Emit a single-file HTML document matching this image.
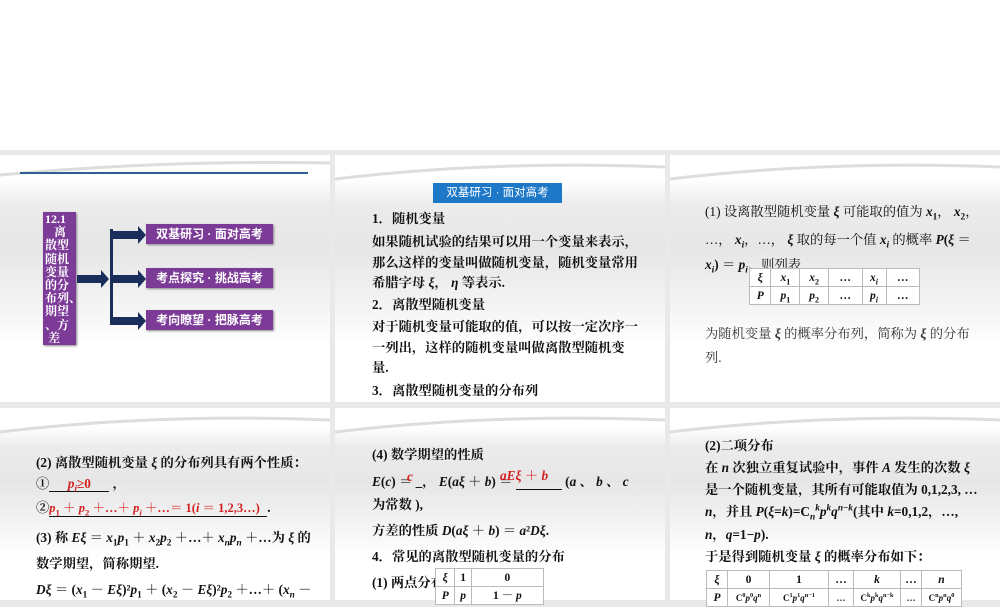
<!DOCTYPE html>
<html><head><meta charset="utf-8"><style>
*{margin:0;padding:0;box-sizing:border-box}
body{width:1000px;height:600px;overflow:hidden;background:#e9e9e9;position:relative;font-family:"Liberation Serif","Noto Serif CJK SC",serif;color:#111}
sub,sup{line-height:0;font-size:70%}
.top{position:absolute;left:0;top:0;width:1000px;height:150px;background:#fff}
.s{position:absolute;overflow:hidden;background:linear-gradient(#fff 0%,#fff 10%,#ececec 20%,#e6e6e6 38%,#f2f2f2 58%,#fff 78%,#fff 100%)}
.s svg.sw{position:absolute;left:0;top:0}
.t{position:absolute;font-size:13.3px;font-weight:bold;white-space:nowrap;line-height:16px}
.r{color:#d42020}
i{font-style:italic}
.pb{position:absolute;background:#7d3b98;color:#fff;font-family:"Liberation Sans","Noto Sans CJK SC",sans-serif;font-weight:bold;font-size:12px;text-align:center;line-height:20px;box-shadow:1px 1px 2px #888;white-space:nowrap}
table{position:absolute;border-collapse:collapse;font-size:11.5px;font-weight:bold;line-height:14px}
td{border:1px solid #bbb;text-align:center;padding:0;height:18px;background:#fff;white-space:nowrap}
.u{display:inline-block;border-bottom:1px solid #111;white-space:nowrap;line-height:15px}
</style></head><body>
<div class="top"></div>

<!-- slide 1 -->
<div class="s" style="left:0;top:155px;width:330px;height:247px">
<svg class="sw" width="330" height="60"><path d="M0 20 Q160 5 330 8" stroke="#ddd" stroke-width="3" fill="none"/><line x1="20" y1="18" x2="308" y2="18" stroke="#2d5f95" stroke-width="2"/></svg>
</div>
<div class="pb" style="left:43px;top:212px;width:33px;height:133px;font-family:'Liberation Serif','Noto Serif CJK SC',serif;font-size:12px;line-height:13.2px;text-align:left;padding:1px 2px;overflow:visible">12.1<br>&nbsp;&nbsp;&nbsp;离<br>散型<br>随机<br>变量<br>的分<br>布列、<br>期望<br>、方<br>&nbsp;差</div>
<svg style="position:absolute;left:76px;top:220px" width="72" height="115">
<g fill="#1a2e5c">
<rect x="1" y="55" width="24" height="8"/><polygon points="25,50 33,59 25,68"/>
<rect x="34" y="9" width="3" height="96"/>
<rect x="37" y="11" width="26" height="8"/><polygon points="62,6 70,15 62,24"/>
<rect x="37" y="55" width="26" height="8"/><polygon points="62,50 70,59 62,68"/>
<rect x="37" y="97" width="26" height="8"/><polygon points="62,92 70,101 62,110"/>
</g></svg>
<div class="pb" style="left:146px;top:224px;width:127px;height:20px">双基研习 · 面对高考</div>
<div class="pb" style="left:146px;top:268px;width:127px;height:20px">考点探究 · 挑战高考</div>
<div class="pb" style="left:146px;top:310px;width:127px;height:20px">考向瞭望 · 把脉高考</div>

<!-- slide 2 -->
<div class="s" style="left:335px;top:155px;width:330px;height:247px">
<svg class="sw" width="330" height="40"><path d="M0 24 Q160 5 330 12" stroke="#ddd" stroke-width="3" fill="none"/></svg>
</div>
<div style="position:absolute;left:433px;top:183px;width:129px;height:20px;background:#1e78c8;color:#fff;font-family:'Liberation Sans','Noto Sans CJK SC',sans-serif;font-size:11.5px;text-align:center;line-height:20px">双基研习 · 面对高考</div>
<div class="t" style="left:372px;top:211px">1．随机变量</div>
<div class="t" style="left:372px;top:234px">如果随机试验的结果可以用一个变量来表示，</div>
<div class="t" style="left:372px;top:255px">那么这样的变量叫做随机变量，随机变量常用</div>
<div class="t" style="left:372px;top:275px">希腊字母 <i>ξ</i>， <i>η</i> 等表示.</div>
<div class="t" style="left:372px;top:297px">2．离散型随机变量</div>
<div class="t" style="left:372px;top:319px">对于随机变量可能取的值，可以按一定次序一</div>
<div class="t" style="left:372px;top:340px">一列出，这样的随机变量叫做离散型随机变</div>
<div class="t" style="left:372px;top:360px">量.</div>
<div class="t" style="left:372px;top:383px">3．离散型随机变量的分布列</div>

<!-- slide 3 -->
<div class="s" style="left:670px;top:155px;width:330px;height:247px">
<svg class="sw" width="330" height="40"><path d="M0 24 Q160 5 330 12" stroke="#ddd" stroke-width="3" fill="none"/></svg>
</div>
<div class="t" style="left:705px;top:204px;font-weight:normal">(1) 设离散型随机变量 <b><i>ξ</i></b> 可能取的值为 <b><i>x</i><sub>1</sub></b>， <b><i>x</i><sub>2</sub></b>，</div>
<div class="t" style="left:705px;top:232px;font-weight:normal">…， <b><i>x<sub>i</sub></i></b>，…， <b><i>ξ</i></b> 取的每一个值 <b><i>x<sub>i</sub></i></b> 的概率 <b><i>P</i>(<i>ξ</i> ＝</b></div>
<div class="t" style="left:705px;top:257px;font-weight:normal"><b><i>x<sub>i</sub></i>) ＝ <i>p<sub>i</sub></i></b>，则列表</div>
<table style="left:749px;top:268px;width:171px"><tr><td><i>ξ</i></td><td><i>x</i><sub>1</sub></td><td><i>x</i><sub>2</sub></td><td>…</td><td><i>x<sub>i</sub></i></td><td>…</td></tr><tr><td><i>P</i></td><td><i>p</i><sub>1</sub></td><td><i>p</i><sub>2</sub></td><td>…</td><td><i>p<sub>i</sub></i></td><td>…</td></tr></table>
<div class="t" style="left:705px;top:326px;font-weight:normal;color:#333">为随机变量 <b><i>ξ</i></b> 的概率分布列，简称为 <b><i>ξ</i></b> 的分布</div>
<div class="t" style="left:705px;top:350px;font-weight:normal;color:#333">列.</div>

<!-- slide 4 -->
<div class="s" style="left:0;top:408px;width:330px;height:192px">
<svg class="sw" width="330" height="40"><path d="M0 24 Q160 5 330 12" stroke="#ddd" stroke-width="3" fill="none"/></svg>
</div>
<div class="t" style="left:36px;top:455px">(2) 离散型随机变量 <i>ξ</i> 的分布列具有两个性质：</div>
<div class="t" style="left:36px;top:476px">①<span class="u r" style="width:60px;text-align:center"><i>p<sub>i</sub></i>≥0</span> ，</div>
<div class="t" style="left:36px;top:500px">②<span class="u r" style="width:218px;font-size:12.5px"><i>p</i><sub>1</sub> ＋ <i>p</i><sub>2</sub> ＋…＋ <i>p<sub>i</sub></i> ＋…＝ 1(<i>i</i> ＝ 1,2,3…)</span>.</div>
<div class="t" style="left:36px;top:530px">(3) 称 <i>Eξ</i> ＝ <i>x</i><sub>1</sub><i>p</i><sub>1</sub> ＋ <i>x</i><sub>2</sub><i>p</i><sub>2</sub> ＋…＋ <i>x<sub>n</sub>p<sub>n</sub></i> ＋…为 <i>ξ</i> 的</div>
<div class="t" style="left:36px;top:556px">数学期望，简称期望.</div>
<div class="t" style="left:36px;top:582px"><i>Dξ</i> ＝ (<i>x</i><sub>1</sub> － <i>Eξ</i>)²<i>p</i><sub>1</sub> ＋ (<i>x</i><sub>2</sub> － <i>Eξ</i>)²<i>p</i><sub>2</sub> ＋…＋ (<i>x<sub>n</sub></i> －</div>

<!-- slide 5 -->
<div class="s" style="left:335px;top:408px;width:330px;height:192px">
<svg class="sw" width="330" height="40"><path d="M0 24 Q160 5 330 12" stroke="#ddd" stroke-width="3" fill="none"/></svg>
</div>
<div class="t" style="left:372px;top:447px">(4) 数学期望的性质</div>
<div class="t" style="left:372px;top:474px"><i>E</i>(<i>c</i>) ＝ _， <i>E</i>(<i>aξ</i> ＋ <i>b</i>) ＝ <span class="u" style="width:46px">&nbsp;</span> (<i>a</i> 、 <i>b</i> 、 <i>c</i></div>
<div class="t r" style="left:407px;top:469px"><i>c</i></div>
<div class="t r" style="left:500px;top:468px"><i>aEξ</i> ＋ <i>b</i></div>
<div class="t" style="left:372px;top:497px">为常数 ),</div>
<div class="t" style="left:372px;top:523px">方差的性质 <i>D</i>(<i>aξ</i> ＋ <i>b</i>) ＝ <i>a</i>²<i>Dξ</i>.</div>
<div class="t" style="left:372px;top:549px">4．常见的离散型随机变量的分布</div>
<div class="t" style="left:372px;top:575px">(1) 两点分布</div>
<table style="left:435px;top:568px;width:109px"><tr><td style="height:14px"><i>ξ</i></td><td>1</td><td>0</td></tr><tr><td style="height:14px"><i>P</i></td><td><i>p</i></td><td>1 － <i>p</i></td></tr></table>

<!-- slide 6 -->
<div class="s" style="left:670px;top:408px;width:330px;height:192px">
<svg class="sw" width="330" height="40"><path d="M0 24 Q160 5 330 12" stroke="#ddd" stroke-width="3" fill="none"/></svg>
</div>
<div class="t" style="left:705px;top:438px">(2)二项分布</div>
<div class="t" style="left:705px;top:460px">在 <i>n</i> 次独立重复试验中，事件 <i>A</i> 发生的次数 <i>ξ</i></div>
<div class="t" style="left:705px;top:482px">是一个随机变量，其所有可能取值为 0,1,2,3, …</div>
<div class="t" style="left:705px;top:504px"><i>n</i>，并且 <i>P</i>(<i>ξ</i>=<i>k</i>)=C<sub><i>n</i></sub><sup><i>k</i></sup><i>p<sup>k</sup>q</i><sup><i>n</i>−<i>k</i></sup>(其中 <i>k</i>=0,1,2，…,</div>
<div class="t" style="left:705px;top:527px"><i>n</i>，<i>q</i>=1−<i>p</i>).</div>
<div class="t" style="left:705px;top:549px">于是得到随机变量 <i>ξ</i> 的概率分布如下：</div>
<table style="left:706px;top:570px;width:256px;table-layout:fixed"><tr><td style="width:21px"><i>ξ</i></td><td style="width:42px">0</td><td style="width:59px">1</td><td style="width:25px">…</td><td style="width:47px"><i>k</i></td><td style="width:21px">…</td><td><i>n</i></td></tr><tr style="font-size:9px"><td style="font-size:11.5px"><i>P</i></td><td>C<sup>0</sup><i>p</i><sup>0</sup><i>q</i><sup>n</sup></td><td>C<sup>1</sup><i>p</i><sup>1</sup><i>q</i><sup>n−1</sup></td><td>…</td><td>C<sup>k</sup><i>p</i><sup>k</sup><i>q</i><sup>n−k</sup></td><td>…</td><td>C<sup>n</sup><i>p</i><sup>n</sup><i>q</i><sup>0</sup></td></tr></table>
</body></html>
